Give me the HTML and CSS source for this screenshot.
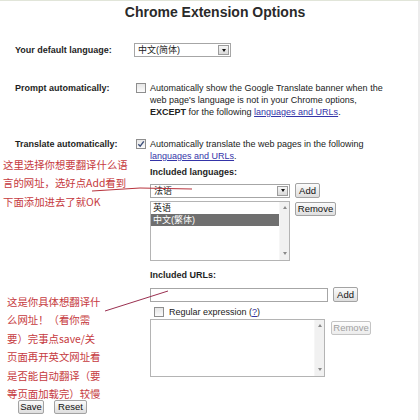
FILE: index.html
```html
<!DOCTYPE html>
<html>
<head>
<meta charset="utf-8">
<title>Chrome Extension Options</title>
<link rel="stylesheet" href="styles.css">
</head>
<body>
<div class="page">
  <h1 class="title">Chrome Extension Options</h1>

  <div class="row row-lang">
    <div class="label">Your default language:</div>
    <div class="ctrl">
      <div class="select sel-lang"><span class="val">中文(简体)</span><span class="drop"></span></div>
    </div>
  </div>

  <div class="row row-prompt">
    <div class="label">Prompt automatically:</div>
    <div class="ctrl">
      <div class="check-line">
        <span class="cb"></span>
        <p class="desc">Automatically show the Google Translate banner when the<br>web page's language is not in your Chrome options,<br><b>EXCEPT</b> for the following <a class="link">languages and URLs</a>.</p>
      </div>
    </div>
  </div>

  <div class="row row-translate">
    <div class="label">Translate automatically:</div>
    <div class="ctrl">
      <div class="check-line">
        <span class="cb checked"><svg width="8" height="8" viewBox="0 0 8 8"><path d="M1.3 4.2 L3.2 6.2 L6.8 1.4" fill="none" stroke="#3d4f7a" stroke-width="1.4"/></svg></span>
        <p class="desc">Automatically translate the web pages in the following<br><a class="link">languages and URLs</a>.</p>
      </div>
      <div class="sub">
        <div class="sub-title">Included languages:</div>
        <div class="line line-add">
          <div class="select sel-add"><span class="val">法语</span><span class="drop"></span></div>
          <button class="btn btn-add">Add</button>
        </div>
        <div class="line line-list">
          <div class="listbox lb-lang">
            <div class="items">
              <div class="item">英语</div>
              <div class="item selected">中文(繁体)</div>
            </div>
            <div class="sb"><span class="arr up"></span><span class="arr down"></span></div>
          </div>
          <button class="btn btn-remove">Remove</button>
        </div>

        <div class="sub-title urls">Included URLs:</div>
        <div class="line line-url">
          <div class="input"></div>
          <button class="btn btn-add">Add</button>
        </div>
        <div class="regex"><span class="cb"></span><span>Regular expression (<a class="link">?</a>)</span></div>
        <div class="line line-list2">
          <div class="listbox lb-url">
            <div class="items"></div>
            <div class="sb"><span class="arr up"></span><span class="arr down"></span></div>
          </div>
          <button class="btn btn-remove2" disabled>Remove</button>
        </div>
      </div>
    </div>
  </div>

  <div class="actions">
    <button class="btn btn-save">Save</button>
    <button class="btn btn-reset">Reset</button>
  </div>

  <div class="note note1">这里选择你想要翻译什么语<br>言的网址，选好点Add看到<br>下面添加进去了就OK</div>
  <div class="note note2">这是你具体想翻译什<br>么网址！（看你需<br>要）完事点save/关<br>页面再开英文网址看<br>是否能自动翻译（要<br>等页面加载完）较慢</div>

  <svg class="marks" width="420" height="420" viewBox="0 0 420 420">
    <polyline points="92,191 140,188 192,189" fill="none" stroke="#b8323c" stroke-width="1"/>
    <line x1="105" y1="311" x2="168" y2="291" stroke="#9a3050" stroke-width="1"/>
  </svg>
</div>
</body>
</html>
```

FILE: styles.css
```css
* { box-sizing: border-box; }

html, body {
  margin: 0;
  padding: 0;
  background: #fff;
}

body {
  font-family: "Liberation Sans", Arial, "Noto Sans CJK SC", sans-serif;
  font-size: 9px;
  line-height: 12px;
  color: #222;
}

.page {
  position: relative;
  width: 420px;
  height: 420px;
  overflow: hidden;
  padding: 0 5px 0 15px;
  box-shadow: inset 0 1px 0 #e1e5d9, inset -2px 0 0 #ececec;
}

.title {
  margin: 3px 0 0;
  font-size: 14px;
  line-height: 18px;
  font-weight: bold;
  text-align: center;
  color: #2a2a2a;
}

.row {
  display: grid;
  grid-template-columns: 119px 1fr;
}

.label {
  font-weight: bold;
  color: #1e1e1e;
}

.row-lang {
  margin-top: 22px;
  align-items: center;
}

.row-prompt { margin-top: 25px; }
.row-translate { margin-top: 20px; }

.select {
  display: flex;
  align-items: center;
  height: 14px;
  border: 1px solid #a6a6a6;
  background: #fff;
  padding-left: 3px;
  font-family: "Liberation Sans", "Noto Sans CJK SC", sans-serif;
}

.select .val { flex: 1; }

.drop {
  width: 11px;
  height: 10px;
  margin-right: 1px;
  border: 1px solid #9c9c9c;
  background: linear-gradient(#f6f6f6, #d9d9d9);
  display: flex;
  align-items: center;
  justify-content: center;
}

.drop::after {
  content: "";
  border-left: 2.5px solid transparent;
  border-right: 2.5px solid transparent;
  border-top: 3px solid #111;
}

.sel-lang { width: 97px; }
.sel-add { width: 140px; }

.check-line {
  display: flex;
  align-items: flex-start;
}

.cb {
  flex: none;
  width: 10px;
  height: 10px;
  margin: 1px 4px 0 2px;
  border: 1px solid #8e8e8e;
  background: linear-gradient(#e6e6e6, #fbfbfb);
  display: flex;
  align-items: center;
  justify-content: center;
}

.desc {
  margin: 0;
  color: #222;
}

.link {
  color: #3434a8;
  text-decoration: underline;
}

.sub { padding-left: 16px; }

.sub-title {
  margin-top: 4px;
  font-weight: bold;
  color: #1e1e1e;
}

.sub-title.urls { margin-top: 8px; }

.line {
  display: flex;
  align-items: flex-start;
}

.line-add { margin-top: 5px; align-items: center; }
.line-list { margin-top: 3px; }
.line-url { margin-top: 6px; align-items: center; }
.line-list2 { margin-top: 1px; }

.btn {
  font-family: "Liberation Sans", Arial, sans-serif;
  font-size: 9.5px;
  line-height: 12px;
  height: 14px;
  padding: 0;
  border: 1px solid #a3a3a3;
  border-radius: 2px;
  background: linear-gradient(#fbfbfb, #dedede);
  color: #111;
  text-align: center;
}

.btn-add { width: 25px; margin-left: 5px; height: 15px; }
.btn-remove { width: 41px; margin-left: 5px; margin-top: 1px; }
.btn-remove2 { width: 40px; margin-left: 6px; margin-top: 2px; color: #a0a0a0; border-color: #c4c4c4; background: linear-gradient(#fdfdfd, #ececec); }

.listbox {
  display: flex;
  border: 1px solid #b4b4b4;
  background: #fff;
  font-family: "Liberation Sans", "Noto Sans CJK SC", sans-serif;
}

.lb-lang { width: 140px; height: 60px; }
.lb-url { width: 175px; height: 58px; }

.items { flex: 1; }

.item {
  height: 12px;
  line-height: 12px;
  padding-left: 2px;
  color: #111;
}

.item.selected {
  background: #6f6f6f;
  color: #fff;
}

.sb {
  width: 10px;
  background: #f1f1f1;
  border-left: 1px solid #f6f6f6;
  display: flex;
  flex-direction: column;
  justify-content: space-between;
  align-items: center;
  padding: 4px 0 5px;
}

.arr {
  width: 0;
  height: 0;
  border-left: 2.5px solid transparent;
  border-right: 2.5px solid transparent;
}

.arr.up { border-bottom: 3px solid #8a8a8a; }
.arr.down { border-top: 3px solid #8a8a8a; }

.input {
  width: 178px;
  height: 14px;
  border: 1px solid #a6a6a6;
  background: #fff;
}

.regex {
  margin-top: 4px;
  display: flex;
  align-items: center;
  height: 12px;
  padding-left: 3px;
}

.regex .cb { margin: 0 5px 0 1px; }

.actions {
  margin-top: 23px;
  padding-left: 3px;
  display: flex;
  gap: 10px;
}

.btn-save { width: 26px; }
.btn-reset { width: 33px; }

.note {
  position: absolute;
  color: #c63a40;
  font-family: "Noto Sans CJK SC", sans-serif;
  font-size: 10.4px;
  line-height: 18.4px;
  white-space: nowrap;
}

.note1 { left: 3px; top: 156px; }
.note2 { left: 7px; top: 293px; }

.marks {
  position: absolute;
  left: 0;
  top: 0;
  pointer-events: none;
}
```
